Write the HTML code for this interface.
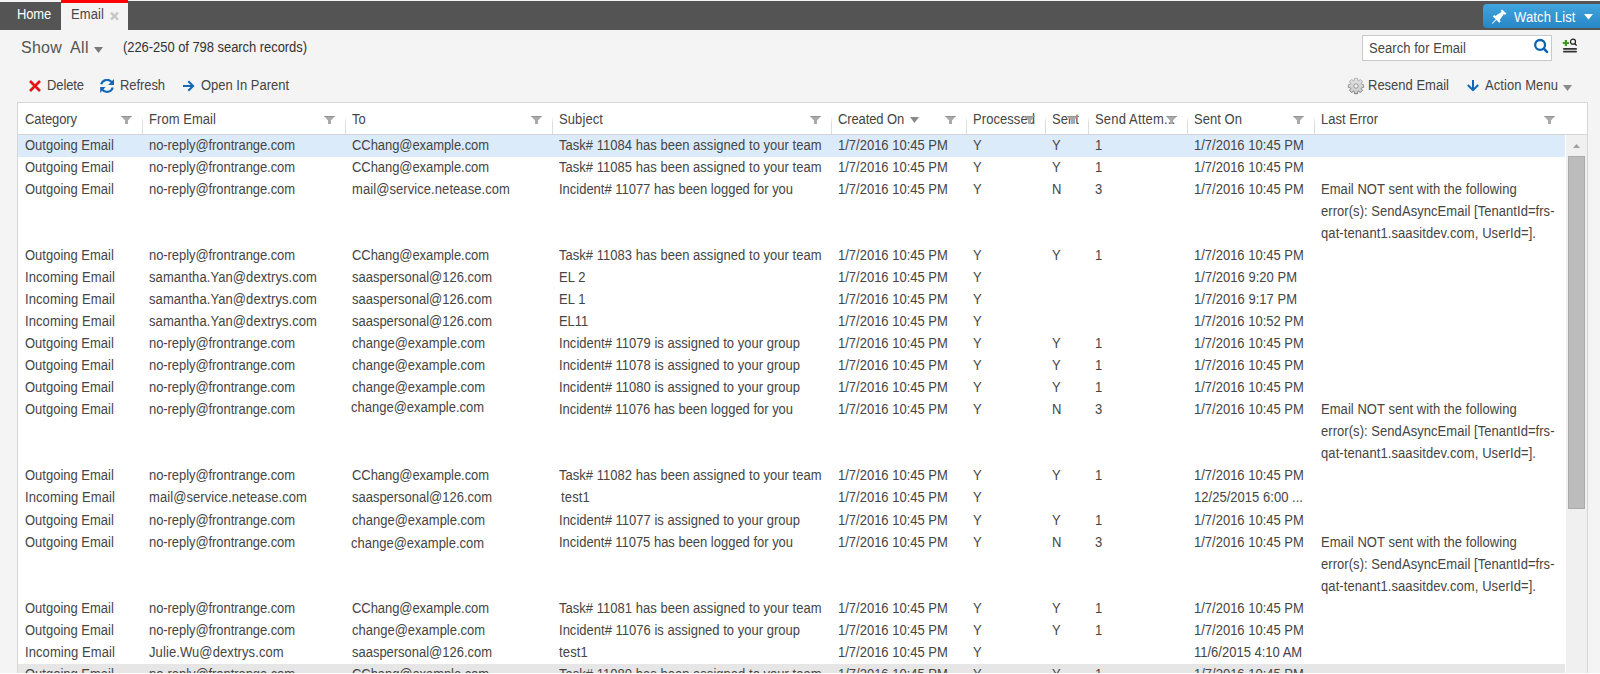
<!DOCTYPE html>
<html><head><meta charset="utf-8"><style>
*{margin:0;padding:0;box-sizing:border-box}
html,body{width:1600px;height:674px;overflow:hidden;background:#fff}
body{font-family:"Liberation Sans",sans-serif;font-size:13px;color:#222;position:relative}
.a{position:absolute;white-space:nowrap}
#wrap{position:absolute;left:0;top:0;width:1600px;height:673px;background:#f4f4f4;overflow:hidden}
#bar{position:absolute;left:0;top:2px;width:1600px;height:28px;background:#545454}
#bar2{position:absolute;left:128px;top:1px;width:1472px;height:1px;background:#545454}
#tabE{position:absolute;left:61px;top:0;width:67px;height:30px;background:#f4f4f4;border-top:3px solid #f00}
#wl{position:absolute;left:1483px;top:4px;width:125px;height:24px;border-radius:4px;background:linear-gradient(#42a5de,#2787c6)}
#grid{position:absolute;left:17px;top:102px;width:1571px;height:600px;background:#fff;border:1px solid #d6d6d6}
.sep{position:absolute;top:116px;width:1px;height:18px;background:linear-gradient(rgba(220,220,220,0),#dcdcdc 40%)}
.flt{position:absolute;top:116px;width:11px;height:8px;line-height:0}
</style></head><body><div id="wrap">
<div id="bar"></div><div id="bar2"></div>
<div class="a" style="left:17px;top:7px;font-size:13px;line-height:16px;color:#fff;letter-spacing:-0.169px;transform:scaleY(1.1);transform-origin:0 12.50px;">Home</div>
<div id="tabE"></div>
<div class="a" style="left:71px;top:7px;font-size:13px;line-height:16px;color:#454545;letter-spacing:0.099px;transform:scaleY(1.1);transform-origin:0 12.50px;">Email</div>
<svg class="a" style="left:110px;top:11px" width="9" height="10" viewBox="0 0 9 10"><path d="M1 1.6L8 8.6M8 1.6L1 8.6" stroke="#c6c6c6" stroke-width="2.3"/></svg>
<div id="wl"></div>
<svg class="a" style="left:1484px;top:4px" width="30" height="24" viewBox="0 0 30 24"><g transform="translate(20.2 7.5) rotate(45)"><path d="M-3 0H3V2H1.5L3 9.5H4.5V11.5H-4.5V9.5H-3L-1.5 2H-3Z" fill="#fff"/><path d="M0 11.5V17" stroke="#fff" stroke-width="1"/></g></svg>
<div class="a" style="left:1514px;top:10px;font-size:13px;line-height:16px;color:#fff;letter-spacing:0.132px;transform:scaleY(1.1);transform-origin:0 12.50px;">Watch List</div>
<svg class="a" style="left:1584px;top:14px" width="9" height="6" viewBox="0 0 9 6"><path d="M0 0H9L4.5 5.5Z" fill="#fff"/></svg>
<div class="a" style="left:21px;top:39px;font-size:16px;line-height:18px;color:#555;letter-spacing:0.244px;">Show</div>
<div class="a" style="left:70px;top:39px;font-size:16px;line-height:18px;color:#555;letter-spacing:0.406px;">All</div>
<svg class="a" style="left:94px;top:47px" width="9" height="6" viewBox="0 0 9 6"><path d="M0 0H9L4.5 6Z" fill="#7a7a7a"/></svg>
<div class="a" style="left:123px;top:40px;font-size:13px;line-height:16px;color:#333;letter-spacing:-0.055px;transform:scaleY(1.1);transform-origin:0 12.50px;">(226-250 of 798 search records)</div>
<svg class="a" style="left:29px;top:80px" width="12" height="12" viewBox="0 0 12 12"><path d="M1 1L11 11M11 1L1 11" stroke="#e31414" stroke-width="2.7"/></svg>
<div class="a" style="left:47px;top:78px;font-size:13px;line-height:16px;color:#454545;letter-spacing:-0.096px;transform:scaleY(1.1);transform-origin:0 12.50px;">Delete</div>
<svg class="a" style="left:100px;top:79px" width="15" height="15" viewBox="0 0 15 15"><path d="M1.23 5.25A6.0 6.0 0 0 1 11.91 3.46" stroke="#0f68b8" stroke-width="2.1" fill="none"/><path d="M14 0V6H8.2Z" fill="#0f68b8"/><path d="M12.77 8.55A6.0 6.0 0 0 1 2.09 10.34" stroke="#0f68b8" stroke-width="2.1" fill="none"/><path d="M0.2 14V8.1H5.5Z" fill="#0f68b8"/></svg>
<div class="a" style="left:120px;top:78px;font-size:13px;line-height:16px;color:#454545;letter-spacing:-0.074px;transform:scaleY(1.1);transform-origin:0 12.50px;">Refresh</div>
<svg class="a" style="left:182px;top:79px" width="14" height="14" viewBox="0 0 14 14"><path d="M1 7H11M6.3 2.2L11.1 7L6.3 11.8" stroke="#0f68b8" stroke-width="2" fill="none"/></svg>
<div class="a" style="left:201px;top:78px;font-size:13px;line-height:16px;color:#454545;letter-spacing:-0.012px;transform:scaleY(1.1);transform-origin:0 12.50px;">Open In Parent</div>
<div class="a" style="left:1362px;top:35px;width:190px;height:26px;background:#fff;border:1px solid #c9c9c9"></div>
<div class="a" style="left:1369px;top:41px;font-size:13px;line-height:16px;color:#454545;letter-spacing:0.057px;transform:scaleY(1.1);transform-origin:0 12.50px;">Search for Email</div>
<svg class="a" style="left:1532px;top:37px" width="18" height="18" viewBox="0 0 18 18"><circle cx="8.1" cy="7.9" r="4.9" stroke="#0a63b3" stroke-width="2.3" fill="none"/><path d="M11.8 11.6L15 14.8" stroke="#0a63b3" stroke-width="2.6" stroke-linecap="round"/></svg>
<svg class="a" style="left:1560px;top:37px" width="20" height="18" viewBox="0 0 20 18"><path d="M5.9 3V9.1M2.8 6H9" stroke="#3c9a1c" stroke-width="2.2"/><circle cx="13" cy="4.7" r="2.5" stroke="#222" stroke-width="1.2" fill="none"/><path d="M14.7 6.5L16.6 8.6" stroke="#222" stroke-width="1.4"/><path d="M3.2 11.8H16.8M3.2 14.7H16.8" stroke="#333" stroke-width="1.7"/></svg>
<svg class="a" style="left:1347px;top:77px" width="18" height="18" viewBox="0 0 18 18"><defs><linearGradient id="gg" x1="0" y1="0" x2="0" y2="1"><stop offset="0" stop-color="#e4e4e4"/><stop offset="1" stop-color="#c8c8c8"/></linearGradient><linearGradient id="gs" x1="0" y1="0" x2="0" y2="1"><stop offset="0" stop-color="#b0b0b0"/><stop offset="1" stop-color="#6c6c6c"/></linearGradient></defs><g transform="translate(9 9)"><path d="M-1.90 -5.40 L-1.45 -7.70 L1.45 -7.70 L1.90 -5.40 L2.47 -5.16 L4.42 -6.47 L6.47 -4.42 L5.16 -2.47 L5.40 -1.90 L7.70 -1.45 L7.70 1.45 L5.40 1.90 L5.16 2.47 L6.47 4.42 L4.42 6.47 L2.47 5.16 L1.90 5.40 L1.45 7.70 L-1.45 7.70 L-1.90 5.40 L-2.47 5.16 L-4.42 6.47 L-6.47 4.42 L-5.16 2.47 L-5.40 1.90 L-7.70 1.45 L-7.70 -1.45 L-5.40 -1.90 L-5.16 -2.47 L-6.47 -4.42 L-4.42 -6.47 L-2.47 -5.16Z" fill="url(#gg)" stroke="url(#gs)" stroke-width="0.9" stroke-linejoin="round"/><circle r="2.2" fill="#f2f2f2" stroke="#8a8a8a" stroke-width="0.9"/></g></svg>
<div class="a" style="left:1368px;top:78px;font-size:13px;line-height:16px;color:#454545;transform:scaleY(1.1);transform-origin:0 12.50px;">Resend Email</div>
<svg class="a" style="left:1466px;top:79px" width="14" height="13" viewBox="0 0 14 13"><path d="M7 1V10.5M1.8 6L7 11.2L12.2 6" stroke="#0f68b8" stroke-width="2" fill="none"/></svg>
<div class="a" style="left:1485px;top:78px;font-size:13px;line-height:16px;color:#454545;letter-spacing:0.067px;transform:scaleY(1.1);transform-origin:0 12.50px;">Action Menu</div>
<svg class="a" style="left:1563px;top:85px" width="9" height="6" viewBox="0 0 9 6"><path d="M0 0H9L4.5 6Z" fill="#8a8a8a"/></svg>
<div id="grid"></div>
<div class="a" style="left:25px;top:112px;font-size:13px;line-height:16px;color:#454545;letter-spacing:-0.094px;transform:scaleY(1.1);transform-origin:0 12.50px;">Category</div>
<div class="a" style="left:149px;top:112px;font-size:13px;line-height:16px;color:#454545;letter-spacing:0.055px;transform:scaleY(1.1);transform-origin:0 12.50px;">From Email</div>
<div class="a" style="left:352px;top:112px;font-size:13px;line-height:16px;color:#454545;letter-spacing:-0.085px;transform:scaleY(1.1);transform-origin:0 12.50px;">To</div>
<div class="a" style="left:559px;top:112px;font-size:13px;line-height:16px;color:#454545;letter-spacing:0.091px;transform:scaleY(1.1);transform-origin:0 12.50px;">Subject</div>
<div class="a" style="left:838px;top:112px;font-size:13px;line-height:16px;color:#454545;letter-spacing:-0.120px;transform:scaleY(1.1);transform-origin:0 12.50px;">Created On</div>
<div class="a" style="left:973px;top:112px;font-size:13px;line-height:16px;color:#454545;letter-spacing:0.064px;transform:scaleY(1.1);transform-origin:0 12.50px;">Processed</div>
<div class="a" style="left:1052px;top:112px;font-size:13px;line-height:16px;color:#454545;letter-spacing:0.064px;transform:scaleY(1.1);transform-origin:0 12.50px;">Sent</div>
<div class="a" style="left:1095px;top:112px;font-size:13px;line-height:16px;color:#454545;letter-spacing:0.172px;transform:scaleY(1.1);transform-origin:0 12.50px;">Send Attem...</div>
<div class="a" style="left:1194px;top:112px;font-size:13px;line-height:16px;color:#454545;letter-spacing:0.043px;transform:scaleY(1.1);transform-origin:0 12.50px;">Sent On</div>
<div class="a" style="left:1321px;top:112px;font-size:13px;line-height:16px;color:#454545;transform:scaleY(1.1);transform-origin:0 12.50px;">Last Error</div>
<div class="sep" style="left:142px"></div>
<div class="sep" style="left:345px"></div>
<div class="sep" style="left:552px"></div>
<div class="sep" style="left:831px"></div>
<div class="sep" style="left:966px"></div>
<div class="sep" style="left:1045px"></div>
<div class="sep" style="left:1088px"></div>
<div class="sep" style="left:1187px"></div>
<div class="sep" style="left:1314px"></div>
<div class="flt" style="left:121px"><svg width="11" height="8" viewBox="0 0 11 8"><path d="M0 0H11L7 4.4V8H4V4.4Z" fill="#aaa"/><path d="M0 0H11L10.1 1H0.9Z" fill="#939393"/></svg></div>
<div class="flt" style="left:324px"><svg width="11" height="8" viewBox="0 0 11 8"><path d="M0 0H11L7 4.4V8H4V4.4Z" fill="#aaa"/><path d="M0 0H11L10.1 1H0.9Z" fill="#939393"/></svg></div>
<div class="flt" style="left:531px"><svg width="11" height="8" viewBox="0 0 11 8"><path d="M0 0H11L7 4.4V8H4V4.4Z" fill="#aaa"/><path d="M0 0H11L10.1 1H0.9Z" fill="#939393"/></svg></div>
<div class="flt" style="left:810px"><svg width="11" height="8" viewBox="0 0 11 8"><path d="M0 0H11L7 4.4V8H4V4.4Z" fill="#aaa"/><path d="M0 0H11L10.1 1H0.9Z" fill="#939393"/></svg></div>
<div class="flt" style="left:945px"><svg width="11" height="8" viewBox="0 0 11 8"><path d="M0 0H11L7 4.4V8H4V4.4Z" fill="#aaa"/><path d="M0 0H11L10.1 1H0.9Z" fill="#939393"/></svg></div>
<div class="flt" style="left:1024px"><svg width="11" height="8" viewBox="0 0 11 8"><path d="M0 0H11L7 4.4V8H4V4.4Z" fill="#aaa"/><path d="M0 0H11L10.1 1H0.9Z" fill="#939393"/></svg></div>
<div class="flt" style="left:1067px"><svg width="11" height="8" viewBox="0 0 11 8"><path d="M0 0H11L7 4.4V8H4V4.4Z" fill="#aaa"/><path d="M0 0H11L10.1 1H0.9Z" fill="#939393"/></svg></div>
<div class="flt" style="left:1166px"><svg width="11" height="8" viewBox="0 0 11 8"><path d="M0 0H11L7 4.4V8H4V4.4Z" fill="#aaa"/><path d="M0 0H11L10.1 1H0.9Z" fill="#939393"/></svg></div>
<div class="flt" style="left:1293px"><svg width="11" height="8" viewBox="0 0 11 8"><path d="M0 0H11L7 4.4V8H4V4.4Z" fill="#aaa"/><path d="M0 0H11L10.1 1H0.9Z" fill="#939393"/></svg></div>
<div class="flt" style="left:1544px"><svg width="11" height="8" viewBox="0 0 11 8"><path d="M0 0H11L7 4.4V8H4V4.4Z" fill="#aaa"/><path d="M0 0H11L10.1 1H0.9Z" fill="#939393"/></svg></div>
<svg class="a" style="left:910px;top:117px" width="9" height="6" viewBox="0 0 9 6"><path d="M0 0H9L4.5 6Z" fill="#8a8a8a"/></svg>
<div class="a" style="left:18px;top:134px;width:1569px;height:1px;background:#d4d4d4"></div>
<div class="a" style="left:18px;top:135px;width:1547px;height:22px;background:#dcebfa"></div>
<div class="a" style="left:25px;top:135px;font-size:13px;line-height:22px;color:#454545;transform:scaleY(1.1);transform-origin:0 15.50px;">Outgoing Email</div>
<div class="a" style="left:149px;top:135px;font-size:13px;line-height:22px;color:#454545;letter-spacing:-0.069px;transform:scaleY(1.1);transform-origin:0 15.50px;">no-reply@frontrange.com</div>
<div class="a" style="left:352px;top:135px;font-size:13px;line-height:22px;color:#454545;letter-spacing:-0.067px;transform:scaleY(1.1);transform-origin:0 15.50px;">CChang@example.com</div>
<div class="a" style="left:559px;top:135px;font-size:13px;line-height:22px;color:#454545;letter-spacing:0.029px;transform:scaleY(1.1);transform-origin:0 15.50px;">Task# 11084 has been assigned to your team</div>
<div class="a" style="left:838px;top:135px;font-size:13px;line-height:22px;color:#454545;transform:scaleY(1.1);transform-origin:0 15.50px;">1/7/2016 10:45 PM</div>
<div class="a" style="left:973px;top:135px;font-size:13px;line-height:22px;color:#454545;letter-spacing:0.329px;transform:scaleY(1.1);transform-origin:0 15.50px;">Y</div>
<div class="a" style="left:1052px;top:135px;font-size:13px;line-height:22px;color:#454545;letter-spacing:0.329px;transform:scaleY(1.1);transform-origin:0 15.50px;">Y</div>
<div class="a" style="left:1095px;top:135px;font-size:13px;line-height:22px;color:#454545;letter-spacing:-0.230px;transform:scaleY(1.1);transform-origin:0 15.50px;">1</div>
<div class="a" style="left:1194px;top:135px;font-size:13px;line-height:22px;color:#454545;transform:scaleY(1.1);transform-origin:0 15.50px;">1/7/2016 10:45 PM</div>
<div class="a" style="left:25px;top:157px;font-size:13px;line-height:22px;color:#454545;transform:scaleY(1.1);transform-origin:0 15.50px;">Outgoing Email</div>
<div class="a" style="left:149px;top:157px;font-size:13px;line-height:22px;color:#454545;letter-spacing:-0.069px;transform:scaleY(1.1);transform-origin:0 15.50px;">no-reply@frontrange.com</div>
<div class="a" style="left:352px;top:157px;font-size:13px;line-height:22px;color:#454545;letter-spacing:-0.067px;transform:scaleY(1.1);transform-origin:0 15.50px;">CChang@example.com</div>
<div class="a" style="left:559px;top:157px;font-size:13px;line-height:22px;color:#454545;letter-spacing:0.029px;transform:scaleY(1.1);transform-origin:0 15.50px;">Task# 11085 has been assigned to your team</div>
<div class="a" style="left:838px;top:157px;font-size:13px;line-height:22px;color:#454545;transform:scaleY(1.1);transform-origin:0 15.50px;">1/7/2016 10:45 PM</div>
<div class="a" style="left:973px;top:157px;font-size:13px;line-height:22px;color:#454545;letter-spacing:0.329px;transform:scaleY(1.1);transform-origin:0 15.50px;">Y</div>
<div class="a" style="left:1052px;top:157px;font-size:13px;line-height:22px;color:#454545;letter-spacing:0.329px;transform:scaleY(1.1);transform-origin:0 15.50px;">Y</div>
<div class="a" style="left:1095px;top:157px;font-size:13px;line-height:22px;color:#454545;letter-spacing:-0.230px;transform:scaleY(1.1);transform-origin:0 15.50px;">1</div>
<div class="a" style="left:1194px;top:157px;font-size:13px;line-height:22px;color:#454545;transform:scaleY(1.1);transform-origin:0 15.50px;">1/7/2016 10:45 PM</div>
<div class="a" style="left:25px;top:179px;font-size:13px;line-height:22px;color:#454545;transform:scaleY(1.1);transform-origin:0 15.50px;">Outgoing Email</div>
<div class="a" style="left:149px;top:179px;font-size:13px;line-height:22px;color:#454545;letter-spacing:-0.069px;transform:scaleY(1.1);transform-origin:0 15.50px;">no-reply@frontrange.com</div>
<div class="a" style="left:352px;top:179px;font-size:13px;line-height:22px;color:#454545;letter-spacing:0.073px;transform:scaleY(1.1);transform-origin:0 15.50px;">mail@service.netease.com</div>
<div class="a" style="left:559px;top:179px;font-size:13px;line-height:22px;color:#454545;letter-spacing:-0.016px;transform:scaleY(1.1);transform-origin:0 15.50px;">Incident# 11077 has been logged for you</div>
<div class="a" style="left:838px;top:179px;font-size:13px;line-height:22px;color:#454545;transform:scaleY(1.1);transform-origin:0 15.50px;">1/7/2016 10:45 PM</div>
<div class="a" style="left:973px;top:179px;font-size:13px;line-height:22px;color:#454545;letter-spacing:0.329px;transform:scaleY(1.1);transform-origin:0 15.50px;">Y</div>
<div class="a" style="left:1052px;top:179px;font-size:13px;line-height:22px;color:#454545;letter-spacing:-0.388px;transform:scaleY(1.1);transform-origin:0 15.50px;">N</div>
<div class="a" style="left:1095px;top:179px;font-size:13px;line-height:22px;color:#454545;letter-spacing:-0.230px;transform:scaleY(1.1);transform-origin:0 15.50px;">3</div>
<div class="a" style="left:1194px;top:179px;font-size:13px;line-height:22px;color:#454545;transform:scaleY(1.1);transform-origin:0 15.50px;">1/7/2016 10:45 PM</div>
<div class="a" style="left:1321px;top:179px;font-size:13px;line-height:22px;color:#454545;letter-spacing:0.050px;transform:scaleY(1.1);transform-origin:0 15.50px;">Email NOT sent with the following</div>
<div class="a" style="left:1321px;top:201px;font-size:13px;line-height:22px;color:#454545;letter-spacing:0.051px;transform:scaleY(1.1);transform-origin:0 15.50px;">error(s): SendAsyncEmail [TenantId=frs-</div>
<div class="a" style="left:1321px;top:223px;font-size:13px;line-height:22px;color:#454545;letter-spacing:0.089px;transform:scaleY(1.1);transform-origin:0 15.50px;">qat-tenant1.saasitdev.com, UserId=].</div>
<div class="a" style="left:25px;top:245px;font-size:13px;line-height:22px;color:#454545;transform:scaleY(1.1);transform-origin:0 15.50px;">Outgoing Email</div>
<div class="a" style="left:149px;top:245px;font-size:13px;line-height:22px;color:#454545;letter-spacing:-0.069px;transform:scaleY(1.1);transform-origin:0 15.50px;">no-reply@frontrange.com</div>
<div class="a" style="left:352px;top:245px;font-size:13px;line-height:22px;color:#454545;letter-spacing:-0.067px;transform:scaleY(1.1);transform-origin:0 15.50px;">CChang@example.com</div>
<div class="a" style="left:559px;top:245px;font-size:13px;line-height:22px;color:#454545;letter-spacing:0.029px;transform:scaleY(1.1);transform-origin:0 15.50px;">Task# 11083 has been assigned to your team</div>
<div class="a" style="left:838px;top:245px;font-size:13px;line-height:22px;color:#454545;transform:scaleY(1.1);transform-origin:0 15.50px;">1/7/2016 10:45 PM</div>
<div class="a" style="left:973px;top:245px;font-size:13px;line-height:22px;color:#454545;letter-spacing:0.329px;transform:scaleY(1.1);transform-origin:0 15.50px;">Y</div>
<div class="a" style="left:1052px;top:245px;font-size:13px;line-height:22px;color:#454545;letter-spacing:0.329px;transform:scaleY(1.1);transform-origin:0 15.50px;">Y</div>
<div class="a" style="left:1095px;top:245px;font-size:13px;line-height:22px;color:#454545;letter-spacing:-0.230px;transform:scaleY(1.1);transform-origin:0 15.50px;">1</div>
<div class="a" style="left:1194px;top:245px;font-size:13px;line-height:22px;color:#454545;transform:scaleY(1.1);transform-origin:0 15.50px;">1/7/2016 10:45 PM</div>
<div class="a" style="left:25px;top:267px;font-size:13px;line-height:22px;color:#454545;letter-spacing:0.081px;transform:scaleY(1.1);transform-origin:0 15.50px;">Incoming Email</div>
<div class="a" style="left:149px;top:267px;font-size:13px;line-height:22px;color:#454545;letter-spacing:0.079px;transform:scaleY(1.1);transform-origin:0 15.50px;">samantha.Yan@dextrys.com</div>
<div class="a" style="left:352px;top:267px;font-size:13px;line-height:22px;color:#454545;letter-spacing:-0.019px;transform:scaleY(1.1);transform-origin:0 15.50px;">saaspersonal@126.com</div>
<div class="a" style="left:559px;top:267px;font-size:13px;line-height:22px;color:#454545;letter-spacing:0.064px;transform:scaleY(1.1);transform-origin:0 15.50px;">EL 2</div>
<div class="a" style="left:838px;top:267px;font-size:13px;line-height:22px;color:#454545;transform:scaleY(1.1);transform-origin:0 15.50px;">1/7/2016 10:45 PM</div>
<div class="a" style="left:973px;top:267px;font-size:13px;line-height:22px;color:#454545;letter-spacing:0.329px;transform:scaleY(1.1);transform-origin:0 15.50px;">Y</div>
<div class="a" style="left:1194px;top:267px;font-size:13px;line-height:22px;color:#454545;letter-spacing:0.023px;transform:scaleY(1.1);transform-origin:0 15.50px;">1/7/2016 9:20 PM</div>
<div class="a" style="left:25px;top:289px;font-size:13px;line-height:22px;color:#454545;letter-spacing:0.081px;transform:scaleY(1.1);transform-origin:0 15.50px;">Incoming Email</div>
<div class="a" style="left:149px;top:289px;font-size:13px;line-height:22px;color:#454545;letter-spacing:0.079px;transform:scaleY(1.1);transform-origin:0 15.50px;">samantha.Yan@dextrys.com</div>
<div class="a" style="left:352px;top:289px;font-size:13px;line-height:22px;color:#454545;letter-spacing:-0.019px;transform:scaleY(1.1);transform-origin:0 15.50px;">saaspersonal@126.com</div>
<div class="a" style="left:559px;top:289px;font-size:13px;line-height:22px;color:#454545;letter-spacing:0.064px;transform:scaleY(1.1);transform-origin:0 15.50px;">EL 1</div>
<div class="a" style="left:838px;top:289px;font-size:13px;line-height:22px;color:#454545;transform:scaleY(1.1);transform-origin:0 15.50px;">1/7/2016 10:45 PM</div>
<div class="a" style="left:973px;top:289px;font-size:13px;line-height:22px;color:#454545;letter-spacing:0.329px;transform:scaleY(1.1);transform-origin:0 15.50px;">Y</div>
<div class="a" style="left:1194px;top:289px;font-size:13px;line-height:22px;color:#454545;letter-spacing:0.023px;transform:scaleY(1.1);transform-origin:0 15.50px;">1/7/2016 9:17 PM</div>
<div class="a" style="left:25px;top:311px;font-size:13px;line-height:22px;color:#454545;letter-spacing:0.081px;transform:scaleY(1.1);transform-origin:0 15.50px;">Incoming Email</div>
<div class="a" style="left:149px;top:311px;font-size:13px;line-height:22px;color:#454545;letter-spacing:0.079px;transform:scaleY(1.1);transform-origin:0 15.50px;">samantha.Yan@dextrys.com</div>
<div class="a" style="left:352px;top:311px;font-size:13px;line-height:22px;color:#454545;letter-spacing:-0.019px;transform:scaleY(1.1);transform-origin:0 15.50px;">saaspersonal@126.com</div>
<div class="a" style="left:559px;top:311px;font-size:13px;line-height:22px;color:#454545;letter-spacing:-0.090px;transform:scaleY(1.1);transform-origin:0 15.50px;">EL11</div>
<div class="a" style="left:838px;top:311px;font-size:13px;line-height:22px;color:#454545;transform:scaleY(1.1);transform-origin:0 15.50px;">1/7/2016 10:45 PM</div>
<div class="a" style="left:973px;top:311px;font-size:13px;line-height:22px;color:#454545;letter-spacing:0.329px;transform:scaleY(1.1);transform-origin:0 15.50px;">Y</div>
<div class="a" style="left:1194px;top:311px;font-size:13px;line-height:22px;color:#454545;transform:scaleY(1.1);transform-origin:0 15.50px;">1/7/2016 10:52 PM</div>
<div class="a" style="left:25px;top:333px;font-size:13px;line-height:22px;color:#454545;transform:scaleY(1.1);transform-origin:0 15.50px;">Outgoing Email</div>
<div class="a" style="left:149px;top:333px;font-size:13px;line-height:22px;color:#454545;letter-spacing:-0.069px;transform:scaleY(1.1);transform-origin:0 15.50px;">no-reply@frontrange.com</div>
<div class="a" style="left:352px;top:333px;font-size:13px;line-height:22px;color:#454545;transform:scaleY(1.1);transform-origin:0 15.50px;">change@example.com</div>
<div class="a" style="left:559px;top:333px;font-size:13px;line-height:22px;color:#454545;letter-spacing:0.015px;transform:scaleY(1.1);transform-origin:0 15.50px;">Incident# 11079 is assigned to your group</div>
<div class="a" style="left:838px;top:333px;font-size:13px;line-height:22px;color:#454545;transform:scaleY(1.1);transform-origin:0 15.50px;">1/7/2016 10:45 PM</div>
<div class="a" style="left:973px;top:333px;font-size:13px;line-height:22px;color:#454545;letter-spacing:0.329px;transform:scaleY(1.1);transform-origin:0 15.50px;">Y</div>
<div class="a" style="left:1052px;top:333px;font-size:13px;line-height:22px;color:#454545;letter-spacing:0.329px;transform:scaleY(1.1);transform-origin:0 15.50px;">Y</div>
<div class="a" style="left:1095px;top:333px;font-size:13px;line-height:22px;color:#454545;letter-spacing:-0.230px;transform:scaleY(1.1);transform-origin:0 15.50px;">1</div>
<div class="a" style="left:1194px;top:333px;font-size:13px;line-height:22px;color:#454545;transform:scaleY(1.1);transform-origin:0 15.50px;">1/7/2016 10:45 PM</div>
<div class="a" style="left:25px;top:355px;font-size:13px;line-height:22px;color:#454545;transform:scaleY(1.1);transform-origin:0 15.50px;">Outgoing Email</div>
<div class="a" style="left:149px;top:355px;font-size:13px;line-height:22px;color:#454545;letter-spacing:-0.069px;transform:scaleY(1.1);transform-origin:0 15.50px;">no-reply@frontrange.com</div>
<div class="a" style="left:352px;top:355px;font-size:13px;line-height:22px;color:#454545;transform:scaleY(1.1);transform-origin:0 15.50px;">change@example.com</div>
<div class="a" style="left:559px;top:355px;font-size:13px;line-height:22px;color:#454545;letter-spacing:0.015px;transform:scaleY(1.1);transform-origin:0 15.50px;">Incident# 11078 is assigned to your group</div>
<div class="a" style="left:838px;top:355px;font-size:13px;line-height:22px;color:#454545;transform:scaleY(1.1);transform-origin:0 15.50px;">1/7/2016 10:45 PM</div>
<div class="a" style="left:973px;top:355px;font-size:13px;line-height:22px;color:#454545;letter-spacing:0.329px;transform:scaleY(1.1);transform-origin:0 15.50px;">Y</div>
<div class="a" style="left:1052px;top:355px;font-size:13px;line-height:22px;color:#454545;letter-spacing:0.329px;transform:scaleY(1.1);transform-origin:0 15.50px;">Y</div>
<div class="a" style="left:1095px;top:355px;font-size:13px;line-height:22px;color:#454545;letter-spacing:-0.230px;transform:scaleY(1.1);transform-origin:0 15.50px;">1</div>
<div class="a" style="left:1194px;top:355px;font-size:13px;line-height:22px;color:#454545;transform:scaleY(1.1);transform-origin:0 15.50px;">1/7/2016 10:45 PM</div>
<div class="a" style="left:25px;top:377px;font-size:13px;line-height:22px;color:#454545;transform:scaleY(1.1);transform-origin:0 15.50px;">Outgoing Email</div>
<div class="a" style="left:149px;top:377px;font-size:13px;line-height:22px;color:#454545;letter-spacing:-0.069px;transform:scaleY(1.1);transform-origin:0 15.50px;">no-reply@frontrange.com</div>
<div class="a" style="left:352px;top:377px;font-size:13px;line-height:22px;color:#454545;transform:scaleY(1.1);transform-origin:0 15.50px;">change@example.com</div>
<div class="a" style="left:559px;top:377px;font-size:13px;line-height:22px;color:#454545;letter-spacing:0.015px;transform:scaleY(1.1);transform-origin:0 15.50px;">Incident# 11080 is assigned to your group</div>
<div class="a" style="left:838px;top:377px;font-size:13px;line-height:22px;color:#454545;transform:scaleY(1.1);transform-origin:0 15.50px;">1/7/2016 10:45 PM</div>
<div class="a" style="left:973px;top:377px;font-size:13px;line-height:22px;color:#454545;letter-spacing:0.329px;transform:scaleY(1.1);transform-origin:0 15.50px;">Y</div>
<div class="a" style="left:1052px;top:377px;font-size:13px;line-height:22px;color:#454545;letter-spacing:0.329px;transform:scaleY(1.1);transform-origin:0 15.50px;">Y</div>
<div class="a" style="left:1095px;top:377px;font-size:13px;line-height:22px;color:#454545;letter-spacing:-0.230px;transform:scaleY(1.1);transform-origin:0 15.50px;">1</div>
<div class="a" style="left:1194px;top:377px;font-size:13px;line-height:22px;color:#454545;transform:scaleY(1.1);transform-origin:0 15.50px;">1/7/2016 10:45 PM</div>
<div class="a" style="left:25px;top:399px;font-size:13px;line-height:22px;color:#454545;transform:scaleY(1.1);transform-origin:0 15.50px;">Outgoing Email</div>
<div class="a" style="left:149px;top:399px;font-size:13px;line-height:22px;color:#454545;letter-spacing:-0.069px;transform:scaleY(1.1);transform-origin:0 15.50px;">no-reply@frontrange.com</div>
<div class="a" style="left:351px;top:397px;font-size:13px;line-height:22px;color:#454545;transform:scaleY(1.1);transform-origin:0 15.50px;">change@example.com</div>
<div class="a" style="left:559px;top:399px;font-size:13px;line-height:22px;color:#454545;letter-spacing:-0.016px;transform:scaleY(1.1);transform-origin:0 15.50px;">Incident# 11076 has been logged for you</div>
<div class="a" style="left:838px;top:399px;font-size:13px;line-height:22px;color:#454545;transform:scaleY(1.1);transform-origin:0 15.50px;">1/7/2016 10:45 PM</div>
<div class="a" style="left:973px;top:399px;font-size:13px;line-height:22px;color:#454545;letter-spacing:0.329px;transform:scaleY(1.1);transform-origin:0 15.50px;">Y</div>
<div class="a" style="left:1052px;top:399px;font-size:13px;line-height:22px;color:#454545;letter-spacing:-0.388px;transform:scaleY(1.1);transform-origin:0 15.50px;">N</div>
<div class="a" style="left:1095px;top:399px;font-size:13px;line-height:22px;color:#454545;letter-spacing:-0.230px;transform:scaleY(1.1);transform-origin:0 15.50px;">3</div>
<div class="a" style="left:1194px;top:399px;font-size:13px;line-height:22px;color:#454545;transform:scaleY(1.1);transform-origin:0 15.50px;">1/7/2016 10:45 PM</div>
<div class="a" style="left:1321px;top:399px;font-size:13px;line-height:22px;color:#454545;letter-spacing:0.050px;transform:scaleY(1.1);transform-origin:0 15.50px;">Email NOT sent with the following</div>
<div class="a" style="left:1321px;top:421px;font-size:13px;line-height:22px;color:#454545;letter-spacing:0.051px;transform:scaleY(1.1);transform-origin:0 15.50px;">error(s): SendAsyncEmail [TenantId=frs-</div>
<div class="a" style="left:1321px;top:443px;font-size:13px;line-height:22px;color:#454545;letter-spacing:0.089px;transform:scaleY(1.1);transform-origin:0 15.50px;">qat-tenant1.saasitdev.com, UserId=].</div>
<div class="a" style="left:25px;top:465px;font-size:13px;line-height:22px;color:#454545;transform:scaleY(1.1);transform-origin:0 15.50px;">Outgoing Email</div>
<div class="a" style="left:149px;top:465px;font-size:13px;line-height:22px;color:#454545;letter-spacing:-0.069px;transform:scaleY(1.1);transform-origin:0 15.50px;">no-reply@frontrange.com</div>
<div class="a" style="left:352px;top:465px;font-size:13px;line-height:22px;color:#454545;letter-spacing:-0.067px;transform:scaleY(1.1);transform-origin:0 15.50px;">CChang@example.com</div>
<div class="a" style="left:559px;top:465px;font-size:13px;line-height:22px;color:#454545;letter-spacing:0.029px;transform:scaleY(1.1);transform-origin:0 15.50px;">Task# 11082 has been assigned to your team</div>
<div class="a" style="left:838px;top:465px;font-size:13px;line-height:22px;color:#454545;transform:scaleY(1.1);transform-origin:0 15.50px;">1/7/2016 10:45 PM</div>
<div class="a" style="left:973px;top:465px;font-size:13px;line-height:22px;color:#454545;letter-spacing:0.329px;transform:scaleY(1.1);transform-origin:0 15.50px;">Y</div>
<div class="a" style="left:1052px;top:465px;font-size:13px;line-height:22px;color:#454545;letter-spacing:0.329px;transform:scaleY(1.1);transform-origin:0 15.50px;">Y</div>
<div class="a" style="left:1095px;top:465px;font-size:13px;line-height:22px;color:#454545;letter-spacing:-0.230px;transform:scaleY(1.1);transform-origin:0 15.50px;">1</div>
<div class="a" style="left:1194px;top:465px;font-size:13px;line-height:22px;color:#454545;transform:scaleY(1.1);transform-origin:0 15.50px;">1/7/2016 10:45 PM</div>
<div class="a" style="left:25px;top:487px;font-size:13px;line-height:22px;color:#454545;letter-spacing:0.081px;transform:scaleY(1.1);transform-origin:0 15.50px;">Incoming Email</div>
<div class="a" style="left:149px;top:487px;font-size:13px;line-height:22px;color:#454545;letter-spacing:0.073px;transform:scaleY(1.1);transform-origin:0 15.50px;">mail@service.netease.com</div>
<div class="a" style="left:352px;top:487px;font-size:13px;line-height:22px;color:#454545;letter-spacing:-0.019px;transform:scaleY(1.1);transform-origin:0 15.50px;">saaspersonal@126.com</div>
<div class="a" style="left:561px;top:487px;font-size:13px;line-height:22px;color:#454545;letter-spacing:0.163px;transform:scaleY(1.1);transform-origin:0 15.50px;">test1</div>
<div class="a" style="left:838px;top:487px;font-size:13px;line-height:22px;color:#454545;transform:scaleY(1.1);transform-origin:0 15.50px;">1/7/2016 10:45 PM</div>
<div class="a" style="left:973px;top:487px;font-size:13px;line-height:22px;color:#454545;letter-spacing:0.329px;transform:scaleY(1.1);transform-origin:0 15.50px;">Y</div>
<div class="a" style="left:1194px;top:487px;font-size:13px;line-height:22px;color:#454545;letter-spacing:0.030px;transform:scaleY(1.1);transform-origin:0 15.50px;">12/25/2015 6:00 ...</div>
<div class="a" style="left:25px;top:510px;font-size:13px;line-height:22px;color:#454545;transform:scaleY(1.1);transform-origin:0 15.50px;">Outgoing Email</div>
<div class="a" style="left:149px;top:510px;font-size:13px;line-height:22px;color:#454545;letter-spacing:-0.069px;transform:scaleY(1.1);transform-origin:0 15.50px;">no-reply@frontrange.com</div>
<div class="a" style="left:352px;top:510px;font-size:13px;line-height:22px;color:#454545;transform:scaleY(1.1);transform-origin:0 15.50px;">change@example.com</div>
<div class="a" style="left:559px;top:510px;font-size:13px;line-height:22px;color:#454545;letter-spacing:0.015px;transform:scaleY(1.1);transform-origin:0 15.50px;">Incident# 11077 is assigned to your group</div>
<div class="a" style="left:838px;top:510px;font-size:13px;line-height:22px;color:#454545;transform:scaleY(1.1);transform-origin:0 15.50px;">1/7/2016 10:45 PM</div>
<div class="a" style="left:973px;top:510px;font-size:13px;line-height:22px;color:#454545;letter-spacing:0.329px;transform:scaleY(1.1);transform-origin:0 15.50px;">Y</div>
<div class="a" style="left:1052px;top:510px;font-size:13px;line-height:22px;color:#454545;letter-spacing:0.329px;transform:scaleY(1.1);transform-origin:0 15.50px;">Y</div>
<div class="a" style="left:1095px;top:510px;font-size:13px;line-height:22px;color:#454545;letter-spacing:-0.230px;transform:scaleY(1.1);transform-origin:0 15.50px;">1</div>
<div class="a" style="left:1194px;top:510px;font-size:13px;line-height:22px;color:#454545;transform:scaleY(1.1);transform-origin:0 15.50px;">1/7/2016 10:45 PM</div>
<div class="a" style="left:25px;top:532px;font-size:13px;line-height:22px;color:#454545;transform:scaleY(1.1);transform-origin:0 15.50px;">Outgoing Email</div>
<div class="a" style="left:149px;top:532px;font-size:13px;line-height:22px;color:#454545;letter-spacing:-0.069px;transform:scaleY(1.1);transform-origin:0 15.50px;">no-reply@frontrange.com</div>
<div class="a" style="left:351px;top:533px;font-size:13px;line-height:22px;color:#454545;transform:scaleY(1.1);transform-origin:0 15.50px;">change@example.com</div>
<div class="a" style="left:559px;top:532px;font-size:13px;line-height:22px;color:#454545;letter-spacing:-0.016px;transform:scaleY(1.1);transform-origin:0 15.50px;">Incident# 11075 has been logged for you</div>
<div class="a" style="left:838px;top:532px;font-size:13px;line-height:22px;color:#454545;transform:scaleY(1.1);transform-origin:0 15.50px;">1/7/2016 10:45 PM</div>
<div class="a" style="left:973px;top:532px;font-size:13px;line-height:22px;color:#454545;letter-spacing:0.329px;transform:scaleY(1.1);transform-origin:0 15.50px;">Y</div>
<div class="a" style="left:1052px;top:532px;font-size:13px;line-height:22px;color:#454545;letter-spacing:-0.388px;transform:scaleY(1.1);transform-origin:0 15.50px;">N</div>
<div class="a" style="left:1095px;top:532px;font-size:13px;line-height:22px;color:#454545;letter-spacing:-0.230px;transform:scaleY(1.1);transform-origin:0 15.50px;">3</div>
<div class="a" style="left:1194px;top:532px;font-size:13px;line-height:22px;color:#454545;transform:scaleY(1.1);transform-origin:0 15.50px;">1/7/2016 10:45 PM</div>
<div class="a" style="left:1321px;top:532px;font-size:13px;line-height:22px;color:#454545;letter-spacing:0.050px;transform:scaleY(1.1);transform-origin:0 15.50px;">Email NOT sent with the following</div>
<div class="a" style="left:1321px;top:554px;font-size:13px;line-height:22px;color:#454545;letter-spacing:0.051px;transform:scaleY(1.1);transform-origin:0 15.50px;">error(s): SendAsyncEmail [TenantId=frs-</div>
<div class="a" style="left:1321px;top:576px;font-size:13px;line-height:22px;color:#454545;letter-spacing:0.089px;transform:scaleY(1.1);transform-origin:0 15.50px;">qat-tenant1.saasitdev.com, UserId=].</div>
<div class="a" style="left:25px;top:598px;font-size:13px;line-height:22px;color:#454545;transform:scaleY(1.1);transform-origin:0 15.50px;">Outgoing Email</div>
<div class="a" style="left:149px;top:598px;font-size:13px;line-height:22px;color:#454545;letter-spacing:-0.069px;transform:scaleY(1.1);transform-origin:0 15.50px;">no-reply@frontrange.com</div>
<div class="a" style="left:352px;top:598px;font-size:13px;line-height:22px;color:#454545;letter-spacing:-0.067px;transform:scaleY(1.1);transform-origin:0 15.50px;">CChang@example.com</div>
<div class="a" style="left:559px;top:598px;font-size:13px;line-height:22px;color:#454545;letter-spacing:0.029px;transform:scaleY(1.1);transform-origin:0 15.50px;">Task# 11081 has been assigned to your team</div>
<div class="a" style="left:838px;top:598px;font-size:13px;line-height:22px;color:#454545;transform:scaleY(1.1);transform-origin:0 15.50px;">1/7/2016 10:45 PM</div>
<div class="a" style="left:973px;top:598px;font-size:13px;line-height:22px;color:#454545;letter-spacing:0.329px;transform:scaleY(1.1);transform-origin:0 15.50px;">Y</div>
<div class="a" style="left:1052px;top:598px;font-size:13px;line-height:22px;color:#454545;letter-spacing:0.329px;transform:scaleY(1.1);transform-origin:0 15.50px;">Y</div>
<div class="a" style="left:1095px;top:598px;font-size:13px;line-height:22px;color:#454545;letter-spacing:-0.230px;transform:scaleY(1.1);transform-origin:0 15.50px;">1</div>
<div class="a" style="left:1194px;top:598px;font-size:13px;line-height:22px;color:#454545;transform:scaleY(1.1);transform-origin:0 15.50px;">1/7/2016 10:45 PM</div>
<div class="a" style="left:25px;top:620px;font-size:13px;line-height:22px;color:#454545;transform:scaleY(1.1);transform-origin:0 15.50px;">Outgoing Email</div>
<div class="a" style="left:149px;top:620px;font-size:13px;line-height:22px;color:#454545;letter-spacing:-0.069px;transform:scaleY(1.1);transform-origin:0 15.50px;">no-reply@frontrange.com</div>
<div class="a" style="left:352px;top:620px;font-size:13px;line-height:22px;color:#454545;transform:scaleY(1.1);transform-origin:0 15.50px;">change@example.com</div>
<div class="a" style="left:559px;top:620px;font-size:13px;line-height:22px;color:#454545;letter-spacing:0.015px;transform:scaleY(1.1);transform-origin:0 15.50px;">Incident# 11076 is assigned to your group</div>
<div class="a" style="left:838px;top:620px;font-size:13px;line-height:22px;color:#454545;transform:scaleY(1.1);transform-origin:0 15.50px;">1/7/2016 10:45 PM</div>
<div class="a" style="left:973px;top:620px;font-size:13px;line-height:22px;color:#454545;letter-spacing:0.329px;transform:scaleY(1.1);transform-origin:0 15.50px;">Y</div>
<div class="a" style="left:1052px;top:620px;font-size:13px;line-height:22px;color:#454545;letter-spacing:0.329px;transform:scaleY(1.1);transform-origin:0 15.50px;">Y</div>
<div class="a" style="left:1095px;top:620px;font-size:13px;line-height:22px;color:#454545;letter-spacing:-0.230px;transform:scaleY(1.1);transform-origin:0 15.50px;">1</div>
<div class="a" style="left:1194px;top:620px;font-size:13px;line-height:22px;color:#454545;transform:scaleY(1.1);transform-origin:0 15.50px;">1/7/2016 10:45 PM</div>
<div class="a" style="left:25px;top:642px;font-size:13px;line-height:22px;color:#454545;letter-spacing:0.081px;transform:scaleY(1.1);transform-origin:0 15.50px;">Incoming Email</div>
<div class="a" style="left:149px;top:642px;font-size:13px;line-height:22px;color:#454545;letter-spacing:0.094px;transform:scaleY(1.1);transform-origin:0 15.50px;">Julie.Wu@dextrys.com</div>
<div class="a" style="left:352px;top:642px;font-size:13px;line-height:22px;color:#454545;letter-spacing:-0.019px;transform:scaleY(1.1);transform-origin:0 15.50px;">saaspersonal@126.com</div>
<div class="a" style="left:559px;top:642px;font-size:13px;line-height:22px;color:#454545;letter-spacing:0.163px;transform:scaleY(1.1);transform-origin:0 15.50px;">test1</div>
<div class="a" style="left:838px;top:642px;font-size:13px;line-height:22px;color:#454545;transform:scaleY(1.1);transform-origin:0 15.50px;">1/7/2016 10:45 PM</div>
<div class="a" style="left:973px;top:642px;font-size:13px;line-height:22px;color:#454545;letter-spacing:0.329px;transform:scaleY(1.1);transform-origin:0 15.50px;">Y</div>
<div class="a" style="left:1194px;top:642px;font-size:13px;line-height:22px;color:#454545;transform:scaleY(1.1);transform-origin:0 15.50px;">11/6/2015 4:10 AM</div>
<div class="a" style="left:18px;top:664px;width:1547px;height:22px;background:#e6e6e6"></div>
<div class="a" style="left:25px;top:664px;font-size:13px;line-height:22px;color:#454545;transform:scaleY(1.1);transform-origin:0 15.50px;">Outgoing Email</div>
<div class="a" style="left:149px;top:664px;font-size:13px;line-height:22px;color:#454545;letter-spacing:-0.069px;transform:scaleY(1.1);transform-origin:0 15.50px;">no-reply@frontrange.com</div>
<div class="a" style="left:352px;top:664px;font-size:13px;line-height:22px;color:#454545;letter-spacing:-0.067px;transform:scaleY(1.1);transform-origin:0 15.50px;">CChang@example.com</div>
<div class="a" style="left:559px;top:664px;font-size:13px;line-height:22px;color:#454545;letter-spacing:0.029px;transform:scaleY(1.1);transform-origin:0 15.50px;">Task# 11080 has been assigned to your team</div>
<div class="a" style="left:838px;top:664px;font-size:13px;line-height:22px;color:#454545;transform:scaleY(1.1);transform-origin:0 15.50px;">1/7/2016 10:45 PM</div>
<div class="a" style="left:973px;top:664px;font-size:13px;line-height:22px;color:#454545;letter-spacing:0.329px;transform:scaleY(1.1);transform-origin:0 15.50px;">Y</div>
<div class="a" style="left:1052px;top:664px;font-size:13px;line-height:22px;color:#454545;letter-spacing:0.329px;transform:scaleY(1.1);transform-origin:0 15.50px;">Y</div>
<div class="a" style="left:1095px;top:664px;font-size:13px;line-height:22px;color:#454545;letter-spacing:-0.230px;transform:scaleY(1.1);transform-origin:0 15.50px;">1</div>
<div class="a" style="left:1194px;top:664px;font-size:13px;line-height:22px;color:#454545;transform:scaleY(1.1);transform-origin:0 15.50px;">1/7/2016 10:45 PM</div>
<div class="a" style="left:1566px;top:135px;width:21px;height:540px;background:#f0f0f0"></div>
<svg class="a" style="left:1573px;top:144px" width="7" height="4" viewBox="0 0 7 4"><path d="M0 4H7L3.5 0Z" fill="#a0a0a0"/></svg>
<div class="a" style="left:1568px;top:156px;width:17px;height:353px;background:#bcbcbc;border:1px solid #ababab"></div>
</div></body></html>
